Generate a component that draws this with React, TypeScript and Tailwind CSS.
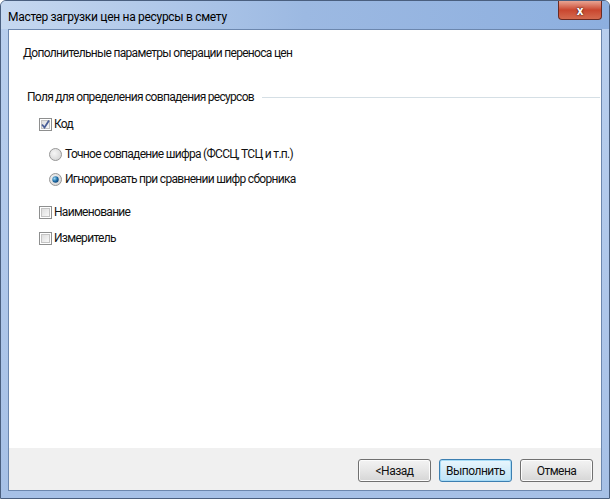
import React from "react";

function Checkbox({ checked }: { checked?: boolean }) {
  return (
    <div className="w-[13px] h-[13px] border border-[#8e8f8f] bg-white flex items-center justify-center p-px">
      <div className="w-full h-full border border-[#c4c4c4] bg-gradient-to-br from-[#dedede] to-[#f8f8f8] flex items-center justify-center">
        {checked && (
          <svg width="9" height="9" viewBox="0 0 9 9" className="overflow-visible">
            <path d="M1 4.5 L3.5 7.5 L8 0.5" stroke="#4a5f97" strokeWidth="1.8" fill="none" />
          </svg>
        )}
      </div>
    </div>
  );
}

function Radio({ checked }: { checked?: boolean }) {
  return (
    <svg width="13" height="13" viewBox="0 0 13 13">
      <defs>
        <radialGradient id="rg" cx="0.4" cy="0.4" r="0.7">
          <stop offset="0" stopColor="#f6f6f6" />
          <stop offset="1" stopColor="#d2d2d2" />
        </radialGradient>
        <radialGradient id="dot" cx="0.35" cy="0.35" r="0.7">
          <stop offset="0" stopColor="#9fd8f4" />
          <stop offset="0.6" stopColor="#1e6fa8" />
          <stop offset="1" stopColor="#10457a" />
        </radialGradient>
      </defs>
      <circle cx="6.5" cy="6.5" r="6" fill="url(#rg)" stroke="#979797" strokeWidth="1" />
      {checked && <circle cx="6.5" cy="6.5" r="3.2" fill="url(#dot)" />}
    </svg>
  );
}

function Btn({ children, primary }: { children: React.ReactNode; primary?: boolean }) {
  return (
    <div
      className={
        "w-[73px] h-[23px] rounded-[3px] border flex items-center justify-center text-[12px] tracking-[-0.5px] text-[#111] " +
        (primary
          ? "border-[#3c7fb1] bg-gradient-to-b from-[#e9f6fd] to-[#bfe3f6] shadow-[inset_0_0_0_1px_#a6dbf6]"
          : "border-[#707070] bg-gradient-to-b from-[#f3f3f3] via-[#e6e6e6] to-[#d6d6d6] shadow-[inset_0_0_0_1px_#fcfcfc]")
      }
    >
      {children}
    </div>
  );
}

const T = "text-[12px] leading-[15px] tracking-[-0.7px] text-[#111]";

export default function App() {
  return (
    <div
      className="w-[610px] h-[499px] bg-gradient-to-b from-[#b9cfee] to-[#a6c0e6] flex flex-col rounded-t-[6px] border border-[#4a5f7f] overflow-hidden"
      style={{ fontFamily: 'Roboto, "Noto Sans", sans-serif' }}
    >
      <div className="h-[28px] shrink-0 flex items-start bg-gradient-to-r from-[#c6d8f0] via-[#9cb9e2] to-[#8dafdf]">
        <div className="pl-[7px] pt-[9px] text-[12px] tracking-[-0.3px] text-black leading-[15px]">
          Мастер загрузки цен на ресурсы в смету
        </div>
        <div className="ml-auto mr-[7px] w-[44px] h-[19px] rounded-b-[4px] border border-t-0 border-[#6b2a22] bg-gradient-to-b from-[#e8a493] via-[#c9462f] to-[#d46a4f] flex items-center justify-center">
          <span className="text-white font-bold text-[13px] leading-none" style={{ textShadow: "0 0 2px #000" }}>x</span>
        </div>
      </div>
      <div className="mx-[7px] mb-[7px] flex-1 flex flex-col border border-[#6c87ae]">
        <div className="flex-1 bg-white flex flex-col">
          <div className={"pl-[14px] pt-[16px] " + T}>
            Дополнительные параметры операции переноса цен
          </div>
          <div className="mt-[29px] flex items-center pl-[18px] pr-[1px]">
            <span className={T}>Поля для определения совпадения ресурсов</span>
            <div className="flex-1 ml-[8px] h-px bg-[#d5dfe5]" />
          </div>
          <div className="pl-[30px] mt-[12px] flex items-center gap-[2px]">
            <Checkbox checked />
            <span className={T}>Код</span>
          </div>
          <div className="pl-[40px] mt-[15px] flex items-center gap-[3px]">
            <Radio />
            <span className={T}>Точное совпадение шифра (ФССЦ, ТСЦ и т.п.)</span>
          </div>
          <div className="pl-[40px] mt-[10px] flex items-center gap-[3px]">
            <Radio checked />
            <span className={T}>Игнорировать при сравнении шифр сборника</span>
          </div>
          <div className="pl-[30px] mt-[18px] flex items-center gap-[2px]">
            <Checkbox />
            <span className={T}>Наименование</span>
          </div>
          <div className="pl-[30px] mt-[11px] flex items-center gap-[2px]">
            <Checkbox />
            <span className={T}>Измеритель</span>
          </div>
        </div>
        <div className="h-[42px] shrink-0 bg-[#f0f0f0] flex items-start justify-end gap-[8px] pr-[8px] pt-[11px]">
          <Btn>&lt;Назад</Btn>
          <Btn primary>Выполнить</Btn>
          <Btn>Отмена</Btn>
        </div>
      </div>
    </div>
  );
}
